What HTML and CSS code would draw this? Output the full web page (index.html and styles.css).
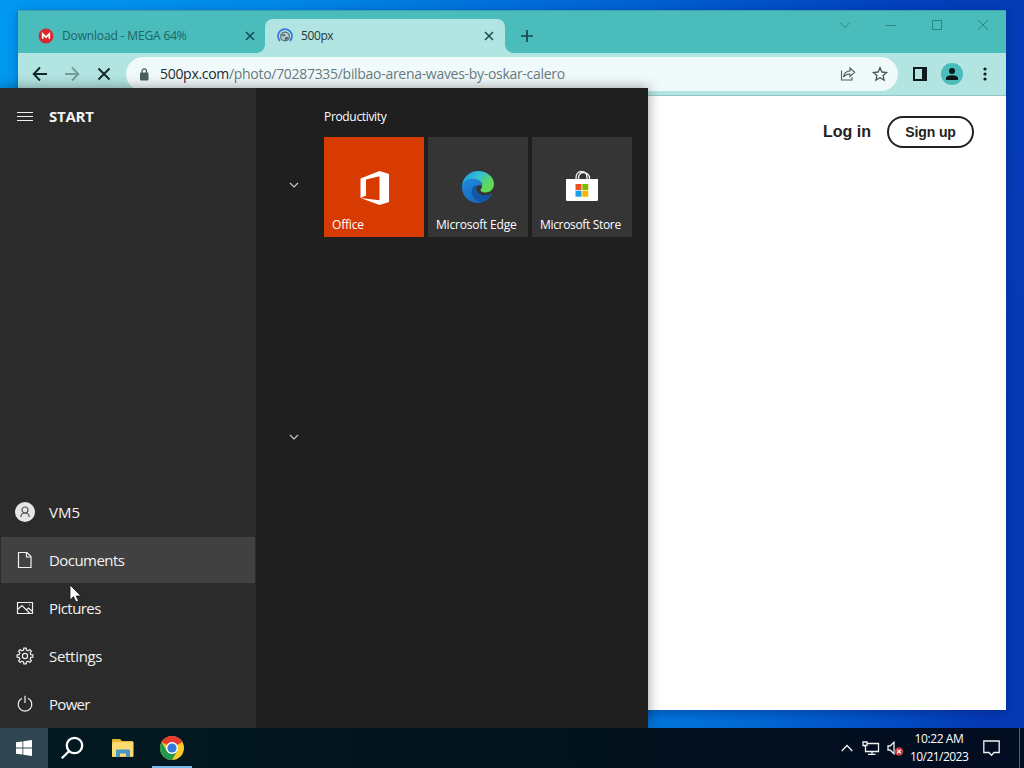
FILE: index.html
```html
<!DOCTYPE html>
<html lang="en">
  <head>
    <meta charset="utf-8">
    <title>Desktop</title>
    <link rel="stylesheet" href="styles.css">
  </head>
  <body>
    <div class="desktop">
      <!-- Browser window -->
      <div class="browser">
        <div class="tab-strip">
          <div class="tab">
            <svg class="favicon" width="16" height="16" viewBox="0 0 16 16">
              <circle cx="8" cy="8" r="7.4" fill="#d9272e"/>
              <path d="M4.700 10.700V6L8 9.200 11.300 6v4.700" fill="none" stroke="#fff" stroke-width="1.700"/>
            </svg>
            <span class="tab-title mega">Download - MEGA 64%</span>
            <svg class="tab-close" width="10" height="10" viewBox="0 0 10 10"><path d="M1 1l8 8M9 1L1 9"/></svg>
          </div>
          <div class="tab active">
            <svg class="favicon" width="16" height="16" viewBox="0 0 16 16">
              <path d="M3 13A7 7 0 1 1 13 13" fill="none" stroke="#3b78d8" stroke-width="1.8"/>
              <circle cx="8" cy="8.500" r="4.400" fill="#b5cdd1" stroke="#566b70" stroke-width="1.200"/>
              <path d="M5 6.500l2.500-.5 1 1.500-1.500 1-2-.5zM8.500 9h3l-1 2.500-2 .8-1-1.500z" fill="#566b70"/>
            </svg>
            <span class="tab-title px">500px</span>
            <svg class="tab-close" width="10" height="10" viewBox="0 0 10 10"><path d="M1 1l8 8M9 1L1 9"/></svg>
          </div>
          <svg class="new-tab" width="12" height="12" viewBox="0 0 12 12"><path d="M6 0v12M0 6h12"/></svg>
          <div class="window-controls">
            <svg width="12" height="12" viewBox="0 0 12 12"><path d="M1 3.500l5 5 5-5"/></svg>
            <svg width="12" height="12" viewBox="0 0 12 12"><path d="M1 6.500h10"/></svg>
            <svg width="12" height="12" viewBox="0 0 12 12"><path d="M1.500 1.500h9v9h-9z"/></svg>
            <svg width="12" height="12" viewBox="0 0 12 12"><path d="M1 1l10 10M11 1L1 11"/></svg>
          </div>
        </div>

        <div class="toolbar">
          <div class="nav">
            <svg width="16" height="16" viewBox="0 0 16 16"><path d="M15 8H2M8 1.500L1.700 8 8 14.500"/></svg>
            <svg class="disabled" width="16" height="16" viewBox="0 0 16 16"><path d="M1 8h13M8 1.500L14.300 8 8 14.500"/></svg>
            <svg width="16" height="16" viewBox="0 0 16 16"><path d="M2.500 2.500l11 11M13.500 2.500l-11 11"/></svg>
          </div>
          <div class="omnibox">
            <svg width="10" height="13" viewBox="0 0 10 13">
              <rect x="1" y="4.500" width="8.500" height="8" rx="1" fill="#4c5f63"/>
              <path d="M3 5V3a2.200 2.200 0 0 1 4.400 0v2" fill="none" stroke="#4c5f63" stroke-width="1.300"/>
            </svg>
            <span class="url"><b>500px.com</b>/photo/70287335/bilbao-arena-waves-by-oskar-calero</span>
            <svg class="share" width="16" height="16" viewBox="0 0 16 16">
              <path d="M1.500 4.500v9.500h10.500v-3M3.500 11c.6-4 3-5.800 6.500-6V2l4.700 4.300L10 10.500V8c-3 0-5 1-6.500 3z"/>
            </svg>
            <svg class="star" width="16" height="16" viewBox="0 0 16 16">
              <path d="M8 1.700l1.900 4.300 4.700.45-3.500 3.100 1 4.600L8 11.700l-4.100 2.450 1-4.600-3.500-3.100L6.100 6z"/>
            </svg>
          </div>
          <svg class="side-panel" width="14" height="14" viewBox="0 0 14 14">
            <path d="M0 0h14v14H0zM2 2v10h7V2z" fill="#10191b" fill-rule="evenodd"/>
          </svg>
          <svg class="avatar" width="22" height="22" viewBox="0 0 22 22">
            <circle cx="11" cy="11" r="11" fill="#49bcbb"/>
            <circle cx="11" cy="8" r="3" fill="#0b1719"/>
            <path d="M5 17v-1.500c0-2.200 3-3.300 6-3.300s6 1.100 6 3.300V17z" fill="#0b1719"/>
          </svg>
          <svg class="kebab" width="4" height="14" viewBox="0 0 4 14">
            <circle cx="2" cy="2" r="1.600"/><circle cx="2" cy="7" r="1.600"/><circle cx="2" cy="12" r="1.600"/>
          </svg>
        </div>

        <div class="page">
          <span class="log-in">Log in</span>
          <span class="sign-up">Sign up</span>
        </div>
      </div>

      <!-- Start menu -->
      <div class="start-menu">
        <div class="start-nav">
          <div class="nav-item start">
            <svg width="18" height="18" viewBox="0 0 18 18"><path d="M1 5.500h16M1 9.500h16M1 13.500h16"/></svg>
            <span>START</span>
          </div>
          <div class="nav-item user">
            <svg width="20" height="20" viewBox="0 0 20 20">
              <circle cx="10" cy="10" r="10" fill="#e6e6e6" stroke="none"/>
              <g stroke="#555"><circle cx="10" cy="8" r="3"/><path d="M5.700 15c.2-2.600 2-4 4.300-4s4.100 1.400 4.300 4"/></g>
            </svg>
            <span class="vm">VM5</span>
          </div>
          <div class="nav-item selected">
            <svg width="18" height="18" viewBox="0 0 18 18"><path d="M2.500 1.500h8.500l4 4v11H2.500zM10.500 1.500V6H15"/></svg>
            <span>Documents</span>
          </div>
          <div class="nav-item">
            <svg width="18" height="18" viewBox="0 0 18 18"><path d="M1.500 3.500h15v11h-15zM1.500 10.500l4.500-4 8 8M10.500 11l2-2 4 3.500M13 6h1"/></svg>
            <span>Pictures</span>
          </div>
          <div class="nav-item">
            <svg width="18" height="18" viewBox="0 0 18 18">
              <circle cx="9" cy="9" r="2.600"/>
              <path d="M7.590 3.170 7.790 1.090 10.210 1.090 10.410 3.170 12.130 3.880 13.740 2.550 15.450 4.260 14.120 5.870 14.830 7.590 16.910 7.790 16.910 10.210 14.830 10.410 14.120 12.130 15.450 13.740 13.740 15.450 12.130 14.120 10.410 14.830 10.210 16.910 7.790 16.910 7.590 14.830 5.870 14.120 4.260 15.450 2.550 13.740 3.880 12.130 3.170 10.410 1.090 10.210 1.090 7.790 3.170 7.590 3.880 5.870 2.550 4.260 4.260 2.550 5.870 3.880z"/>
            </svg>
            <span class="sets">Settings</span>
          </div>
          <div class="nav-item">
            <svg width="18" height="18" viewBox="0 0 18 18"><path d="M9 .8V8M6 3.200a6.800 6.800 0 1 0 6 0"/></svg>
            <span class="power">Power</span>
          </div>
        </div>

        <div class="app-list">
          <svg width="10" height="6" viewBox="0 0 10 6"><path d="M1 1l4 4 4-4"/></svg>
          <svg width="10" height="6" viewBox="0 0 10 6"><path d="M1 1l4 4 4-4"/></svg>
        </div>

        <div class="tiles">
          <div class="group-name">Productivity</div>
          <div class="tile-row">
            <div class="tile office">
              <svg width="34" height="36" viewBox="0 0 34 36">
                <path d="M2.500 8.500L21.500 1 31 4v28l-9.500 3L2.500 28l19 2.200V6.300L8 9.500v16L2.500 28z" fill="#fff"/>
              </svg>
              <span>Office</span>
            </div>
            <div class="tile edge">
              <svg width="34" height="34" viewBox="0 0 34 34">
                <defs>
                  <linearGradient id="edge-top" x1="0" y1=".2" x2="1" y2=".8">
                    <stop offset="0" stop-color="#1d9bdc"/>
                    <stop offset=".4" stop-color="#35c1d5"/>
                    <stop offset=".75" stop-color="#5bd860"/>
                    <stop offset="1" stop-color="#67dc51"/>
                  </linearGradient>
                  <linearGradient id="edge-low" x1="0" y1="0" x2=".6" y2="1">
                    <stop offset="0" stop-color="#1f8bdc"/>
                    <stop offset="1" stop-color="#1668bd"/>
                  </linearGradient>
                </defs>
                <path d="M1 17C1 8 8 1 17 1s16 6 16 13c0 5-4 8.500-8.500 8.500-4 0-6-2-4.500-3.500 3-4 0-9-6-9C7 10 1 13 1 17z" fill="url(#edge-top)"/>
                <path d="M1 17c0-5 5-8.500 10.500-8.500 6 0 10 3.500 9.500 7.500-2-2-6-1-6 2.500C15 23.500 22 28 31 24c-3 5-8 9-14 9C8 33 1 26 1 17z" fill="url(#edge-low)"/>
                <path d="M15.500 15c-4.500 1-6 6-4 10.500C13.500 30 17 32 20 32.500c5-1 9-4.500 11-8.500-9 3.500-16 0-16-5 0-1.500 0-3 .5-4z" fill="#1257a6"/>
              </svg>
              <span>Microsoft Edge</span>
            </div>
            <div class="tile store">
              <svg width="34" height="34" viewBox="0 0 34 34">
                <path d="M11 10V8c0-4 2.200-6.500 5.500-6.500S22 4 22 8v2M13.500 10V8c0-3.500 2-5.500 5-5.500S24.500 4.500 24.500 8v2" fill="none" stroke="#f2f2f2" stroke-width="1.300"/>
                <path d="M1 9h32v20.500q0 1.500-1.500 1.500h-29Q1 31 1 29.500z" fill="#fff"/>
                <path d="M10.500 14h6v6h-6z" fill="#f25022"/><path d="M17.300 14h6v6h-6z" fill="#7fba00"/>
                <path d="M10.500 20.700h6v6h-6z" fill="#1a9fe8"/><path d="M17.300 20.700h6v6h-6z" fill="#f5b800"/>
              </svg>
              <span>Microsoft Store</span>
            </div>
          </div>
        </div>
      </div>

      <!-- Taskbar -->
      <div class="taskbar">
        <div class="task start-button">
          <svg width="16" height="16" viewBox="0 0 16 16"><path d="M0 2.300l6.500-.9v6.200H0zM7.300 1.300L16 0v7.600H7.300zM0 8.400h6.500v6.200L0 13.700zM7.300 8.400H16V16l-8.700-1.300z" fill="#fff"/></svg>
        </div>
        <div class="task search">
          <svg width="24" height="24" viewBox="0 0 24 24"><circle cx="14.500" cy="9.500" r="7.700"/><path d="M9 15.200l-7.200 7"/></svg>
        </div>
        <div class="task">
          <svg width="22" height="20" viewBox="0 0 22 20">
            <path d="M0 2q0-1 1-1h7l2 2h11v16H0z" fill="#e9b531"/>
            <path d="M1 4h20.500v14.500H0V6z" fill="#fbdc72"/>
            <path d="M4 19v-6.500q0-1 1-1h12q1 0 1 1V19h-4v-3.500H8V19z" fill="#4696c8"/>
          </svg>
        </div>
        <div class="task running">
          <svg width="24" height="24" viewBox="0 0 24 24">
            <circle cx="12" cy="12" r="12" fill="#fbc928"/>
            <path d="M12 12L1.600 6A12 12 0 0 1 22.400 6z" fill="#e33b2e"/>
            <path d="M1.600 6A12 12 0 0 0 12 24l5.200-9L12 12 6.800 15z" fill="#219a4b"/>
            <circle cx="12" cy="12" r="6" fill="#fff"/>
            <circle cx="12" cy="12" r="4.600" fill="#3478dc"/>
          </svg>
        </div>
        <div class="tray">
          <svg width="12" height="8" viewBox="0 0 12 8"><path d="M.7 7L6 1.500 11.300 7"/></svg>
          <svg class="network" width="18" height="14" viewBox="0 0 18 14"><path d="M5 2.500h11.500v8H3.500V6M10 10.500v3M6 13.300h7.500M1 1h4v3.500H1zM3 4.500V6"/></svg>
          <svg class="volume" width="17" height="15" viewBox="0 0 17 15">
            <path d="M1 5h2l4-3.700v11.400L3 9H1z"/>
            <circle cx="12" cy="10.500" r="4.300" fill="#c83a3b" stroke="none"/>
            <path d="M10.200 8.700l3.600 3.600M13.800 8.700l-3.600 3.600"/>
          </svg>
          <div class="clock">
            <div class="time">10:22 AM</div>
            <div class="date">10/21/2023</div>
          </div>
          <svg width="17" height="17" viewBox="0 0 17 17"><path d="M.8 1h15.400v11.500H11L8.500 15.300 6 12.500H.8z"/></svg>
          <div class="show-desktop"></div>
        </div>
      </div>

      <svg class="cursor" width="13" height="19" viewBox="0 0 13 19">
        <path d="M1 1v15l3.500-3.200L7 18l2.500-1.200L7.200 12H12z" fill="#fff" stroke="#111" stroke-width=".8"/>
      </svg>
    </div>
  </body>
</html>
```
FILE: styles.css
```css
* {
  box-sizing: border-box;
}

body {
  margin: 0;
  font-family: "Open Sans", "Noto Sans", sans-serif;
}

svg {
  display: block;
  flex: none;
}

.desktop {
  position: relative;
  width: 1024px;
  height: 768px;
  overflow: hidden;
  white-space: nowrap;
  background:
    radial-gradient(ellipse 340px 150px at 640px 740px, #0078dc, rgba(0, 120, 220, 0)),
    linear-gradient(97deg, #0098f0 0%, #0088e8 25%, #0060d0 58%, #0341bc 80%, #0537b2 100%);
}

/* Browser window */
.browser {
  position: absolute;
  left: 18px;
  top: 10px;
  width: 988px;
  height: 700px;
  display: flex;
  flex-direction: column;
  background: #fff;
  box-shadow: 0 2px 8px rgba(0, 20, 80, 0.35);
}

.tab-strip {
  height: 43px;
  padding: 8px 17px 0 8px;
  display: flex;
  background: #49bcbb;
  border-top: 1px solid #3da2ae;
}

.tab {
  position: relative;
  width: 239px;
  height: 34px;
  padding: 0 10px 0 12px;
  display: flex;
  align-items: center;
  font-size: 12px;
  color: #1f6468;
}

.tab.active {
  width: 240px;
  padding-right: 11px;
  background: #b2e4e1;
  border-radius: 8px 8px 0 0;
  color: #24393c;
}

/* curved feet of the selected tab */
.tab.active::before,
.tab.active::after {
  content: "";
  position: absolute;
  bottom: 0;
  width: 8px;
  height: 8px;
}

.tab.active::before {
  left: -8px;
  background: radial-gradient(circle at 0 0, #49bcbb 7.5px, #b2e4e1 8px);
}

.tab.active::after {
  right: -8px;
  background: radial-gradient(circle at 100% 0, #49bcbb 7.5px, #b2e4e1 8px);
}

.tab-title {
  flex: 1;
  margin-left: 8px;
  padding-bottom: 1px;
}

.mega {
  letter-spacing: -0.15px;
}

.px {
  letter-spacing: -0.4px;
}

.tab-close {
  fill: none;
  stroke: #144a4e;
  stroke-width: 1.5;
}

.new-tab {
  margin: 11px 0 0 16px;
  fill: none;
  stroke: #12474b;
  stroke-width: 1.7;
}

.window-controls {
  margin-left: auto;
  display: flex;
  gap: 34px;
}

.window-controls svg {
  fill: none;
  stroke: #2c8488;
  stroke-width: 1;
}

.toolbar {
  height: 43px;
  padding: 0 19px 0 14px;
  display: flex;
  align-items: center;
  background: #b2e4e1;
  border-bottom: 1px solid #92c6c4;
}

.nav {
  display: flex;
  gap: 16px;
}

.nav svg {
  fill: none;
  stroke: #122729;
  stroke-width: 1.9;
}

.nav .disabled {
  stroke: #769c9d;
}

.omnibox {
  width: 772px;
  height: 34px;
  margin-left: 14px;
  padding: 0 10px 0 13px;
  border-radius: 17px;
  background: #f1fafb;
  display: flex;
  align-items: center;
}

.url {
  flex: 1;
  margin-left: 11px;
  padding-bottom: 1px;
  font-size: 14px;
  letter-spacing: -0.3px;
  color: #697b7e;
}

.url b {
  font-weight: 400;
  color: #1b2a2d;
}

.share,
.star {
  fill: none;
  stroke: #4b5c5f;
  stroke-width: 1.1;
}

.star {
  margin-left: 16px;
  stroke-width: 1.4;
}

.side-panel {
  margin-left: 15px;
}

.avatar {
  margin-left: 14px;
}

.kebab {
  margin-left: auto;
  fill: #10191b;
}

.page {
  flex: 1;
  padding: 20px 32px 0 0;
  display: flex;
  justify-content: flex-end;
  align-items: flex-start;
  font-family: "Liberation Sans", Arial, sans-serif;
  font-weight: 700;
  color: #222;
}

.log-in {
  font-size: 16px;
  line-height: 31px;
}

.sign-up {
  width: 87px;
  height: 32px;
  margin-left: 16px;
  border: 2px solid #222;
  border-radius: 16px;
  font-size: 14px;
  line-height: 28px;
  letter-spacing: -0.1px;
  text-align: center;
}

/* Start menu */
.start-menu {
  position: absolute;
  left: 0;
  top: 88px;
  width: 648px;
  height: 640px;
  display: flex;
  background: #1f1f1f;
  box-shadow: 0 0 12px rgba(0, 0, 0, 0.4);
  color: #fff;
}

.start-nav {
  width: 256px;
  padding-top: 4px;
  display: flex;
  flex-direction: column;
  background: #2b2b2b;
}

.nav-item {
  height: 48px;
  padding-left: 16px;
  display: flex;
  align-items: center;
  gap: 15px;
  font-size: 15px;
  letter-spacing: -0.55px;
  color: #f2f2f2;
}

.nav-item svg {
  fill: none;
  stroke: #f0f0f0;
  stroke-width: 1.2;
}

.nav-item.start {
  margin-bottom: auto;
  font-weight: 700;
  letter-spacing: -0.25px;
}

.nav-item.user {
  padding-left: 15px;
  gap: 14px;
}

.nav-item.selected {
  height: 46px;
  margin: 1px;
  padding-left: 15px;
  background: #414141;
}

.vm {
  letter-spacing: 0;
}

.sets {
  letter-spacing: -0.3px;
}

.power {
  letter-spacing: -0.7px;
}

.app-list {
  width: 68px;
  padding: 94px 0 0 33px;
  display: flex;
  flex-direction: column;
  gap: 246px;
}

.app-list svg {
  fill: none;
  stroke: #ccc;
  stroke-width: 1.1;
}

.tiles {
  padding-top: 20px;
  font-size: 12px;
}

.group-name {
  height: 29px;
  line-height: 18px;
  letter-spacing: -0.33px;
}

.tile-row {
  display: flex;
  gap: 4px;
}

.tile {
  width: 100px;
  height: 100px;
  padding: 33px 0 4px 8px;
  display: flex;
  flex-direction: column;
  justify-content: space-between;
  letter-spacing: -0.2px;
  background: #353535;
}

.tile svg {
  margin-left: 25px;
}

.tile.office {
  background: #d83b01;
}

.tile.office svg {
  margin-left: 26px;
}

.tile.store {
  letter-spacing: -0.33px;
}

/* Taskbar */
.taskbar {
  position: absolute;
  left: 0;
  top: 728px;
  width: 1024px;
  height: 40px;
  display: flex;
  background: linear-gradient(90deg, #031a22, #02121d 60%, #020c22);
  color: #fff;
}

.task {
  width: 50px;
  display: flex;
  align-items: center;
  justify-content: center;
}

.start-button {
  width: 48px;
  background: #304650;
}

.search {
  padding-right: 2px;
}

.search svg {
  fill: none;
  stroke: #fff;
  stroke-width: 2.3;
}

.running {
  width: 40px;
  margin-left: 4px;
  box-shadow: inset 0 -2px #76b9ed;
}

.tray {
  margin-left: auto;
  display: flex;
  align-items: center;
}

.tray svg {
  margin-right: 9px;
  fill: none;
  stroke: #f2f2f2;
  stroke-width: 1.3;
}

.tray .network {
  margin-right: 7px;
}

.tray .volume {
  margin-right: 6px;
}

.clock {
  width: 58px;
  margin-right: 15px;
  font-size: 12px;
  line-height: 18px;
  letter-spacing: -0.4px;
  text-align: center;
}

.date {
  letter-spacing: -0.55px;
}

.tray .show-desktop {
  width: 5px;
  height: 40px;
  margin-left: 10px;
  border-left: 1px solid #566071;
}

.cursor {
  position: absolute;
  left: 69px;
  top: 584px;
}
```
